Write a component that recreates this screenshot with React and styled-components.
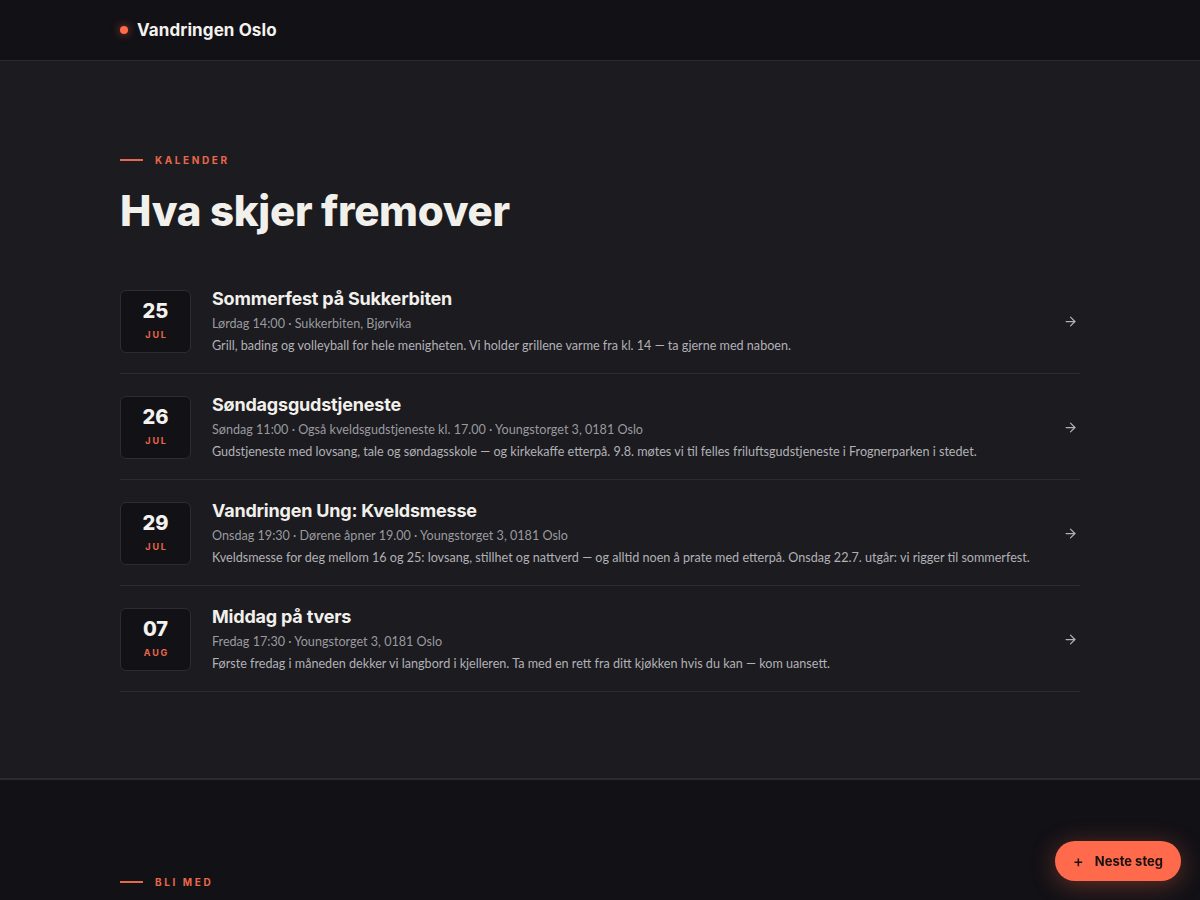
import React from 'react';
import styled, { createGlobalStyle } from 'styled-components';

const events = [
  {
    day: '25',
    month: 'JUL',
    title: 'Sommerfest på Sukkerbiten',
    meta: 'Lørdag 14:00 · Sukkerbiten, Bjørvika',
    text: 'Grill, bading og volleyball for hele menigheten. Vi holder grillene varme fra kl. 14 — ta gjerne med naboen.',
  },
  {
    day: '26',
    month: 'JUL',
    title: 'Søndagsgudstjeneste',
    meta: 'Søndag 11:00 · Også kveldsgudstjeneste kl. 17.00 · Youngstorget 3, 0181 Oslo',
    text: 'Gudstjeneste med lovsang, tale og søndagsskole — og kirkekaffe etterpå. 9.8. møtes vi til felles friluftsgudstjeneste i Frognerparken i stedet.',
  },
  {
    day: '29',
    month: 'JUL',
    title: 'Vandringen Ung: Kveldsmesse',
    meta: 'Onsdag 19:30 · Dørene åpner 19.00 · Youngstorget 3, 0181 Oslo',
    text: 'Kveldsmesse for deg mellom 16 og 25: lovsang, stillhet og nattverd — og alltid noen å prate med etterpå. Onsdag 22.7. utgår: vi rigger til sommerfest.',
  },
  {
    day: '07',
    month: 'AUG',
    title: 'Middag på tvers',
    meta: 'Fredag 17:30 · Youngstorget 3, 0181 Oslo',
    text: 'Første fredag i måneden dekker vi langbord i kjelleren. Ta med en rett fra ditt kjøkken hvis du kan — kom uansett.',
  },
];

const GlobalStyle = createGlobalStyle`
  body {
    margin: 0;
    background: #121116;
    font-family: Inter, "Noto Sans", sans-serif;
    color: #f2f0eb;
  }
`;

const Arrow = () => (
  <svg width="15" height="15" viewBox="0 0 24 24" fill="none" stroke="currentColor" strokeWidth="2" strokeLinecap="round" strokeLinejoin="round">
    <path d="M5 12h14" />
    <path d="m12 5 7 7-7 7" />
  </svg>
);

const App = () => {
  return (
    <>
      <GlobalStyle />
      <StyledHeader>
        <StyledInner>
          <StyledLogo>
            <StyledDot />
            Vandringen Oslo
          </StyledLogo>
        </StyledInner>
      </StyledHeader>
      <StyledCalendar>
        <StyledInner>
          <StyledEyebrow>Kalender</StyledEyebrow>
          <StyledHeading>Hva skjer fremover</StyledHeading>
          <StyledList>
            {events.map((ev) => (
              <StyledRow key={ev.title}>
                <StyledDate>
                  <span>{ev.day}</span>
                  <small>{ev.month}</small>
                </StyledDate>
                <StyledBody>
                  <h3>{ev.title}</h3>
                  <StyledMeta>{ev.meta}</StyledMeta>
                  <StyledText>{ev.text}</StyledText>
                </StyledBody>
                <StyledArrow>
                  <Arrow />
                </StyledArrow>
              </StyledRow>
            ))}
          </StyledList>
        </StyledInner>
      </StyledCalendar>
      <StyledJoin>
        <StyledInner>
          <StyledEyebrow>Bli med</StyledEyebrow>
        </StyledInner>
      </StyledJoin>
      <StyledFab>
        <span>+</span>
        Neste steg
      </StyledFab>
    </>
  );
};

const StyledInner = styled.div`
  width: 960px;
  margin: 0 auto;
`;

const StyledHeader = styled.header`
  height: 60px;
  background: #121116;
  border-bottom: 1px solid #2a2a30;
  display: flex;
  align-items: center;
`;

const StyledLogo = styled.div`
  display: flex;
  align-items: center;
  gap: 9px;
  font-size: 17px;
  font-weight: 700;
  color: #f4f2ee;
  letter-spacing: 0.1px;
`;

const StyledDot = styled.span`
  width: 8px;
  height: 8px;
  border-radius: 50%;
  background: #ff6a48;
  box-shadow: 0 0 8px rgba(255, 106, 72, 0.6);
`;

const StyledCalendar = styled.section`
  background: #1b1b20;
  padding: 93px 0 86px;
  border-bottom: 2px solid #2a2a30;
`;

const StyledEyebrow = styled.div`
  display: flex;
  align-items: center;
  gap: 12px;
  font-size: 10px;
  font-weight: 700;
  letter-spacing: 2.6px;
  text-transform: uppercase;
  color: #e9684b;
  &::before {
    content: '';
    width: 23px;
    height: 2px;
    background: #e9684b;
  }
`;

const StyledHeading = styled.h1`
  margin: 21px 0 33px;
  font-size: 42px;
  font-weight: 800;
  letter-spacing: -0.3px;
  line-height: 1.15;
  color: #f2f0eb;
`;

const StyledList = styled.div`
  display: flex;
  flex-direction: column;
`;

const StyledRow = styled.div`
  display: flex;
  align-items: center;
  gap: 21px;
  padding: 20px 0 19.5px;
  border-bottom: 1px solid #2c2c32;
`;

const StyledDate = styled.div`
  flex: none;
  width: 71px;
  height: 63px;
  box-sizing: border-box;
  border: 1px solid #2c2c32;
  border-radius: 6px;
  background: #121116;
  display: flex;
  flex-direction: column;
  align-items: center;
  justify-content: center;
  gap: 9px;
  span {
    font-size: 20px;
    font-weight: 800;
    line-height: 1;
    color: #f4f2ee;
    margin-top: -2px;
  }
  small {
    font-size: 9px;
    font-weight: 700;
    line-height: 1;
    letter-spacing: 1.8px;
    color: #e9684b;
    margin-left: 2px;
  }
`;

const StyledBody = styled.div`
  flex: 1;
  display: flex;
  flex-direction: column;
  h3 {
    margin: 0 0 4px;
    font-size: 18px;
    font-weight: 700;
    line-height: 1.25;
    letter-spacing: -0.2px;
    color: #f2f0eb;
  }
`;

const StyledMeta = styled.div`
  font-family: Lato, Inter, sans-serif;
  font-size: 12.6px;
  line-height: 1.35;
  color: #9a9a9f;
  margin-bottom: 5px;
`;

const StyledText = styled.div`
  font-family: Lato, Inter, sans-serif;
  font-size: 12.6px;
  line-height: 1.35;
  color: #b2b1b5;
`;

const StyledArrow = styled.div`
  flex: none;
  color: #b0b0b5;
  padding-right: 2px;
  display: flex;
`;

const StyledJoin = styled.section`
  background: #121116;
  padding: 96px 0 80px;
`;

const StyledFab = styled.button`
  position: fixed;
  right: 19px;
  bottom: 19px;
  height: 40px;
  padding: 0 18px;
  border: none;
  border-radius: 20px;
  background: #ff6a4c;
  color: #1a1210;
  font-family: Inter, "Noto Sans", sans-serif;
  font-size: 13px;
  font-weight: 700;
  display: flex;
  align-items: center;
  gap: 11px;
  box-shadow: 0 4px 24px rgba(255, 106, 72, 0.35);
  span {
    font-size: 16px;
    font-weight: 500;
  }
`;

export default App;
